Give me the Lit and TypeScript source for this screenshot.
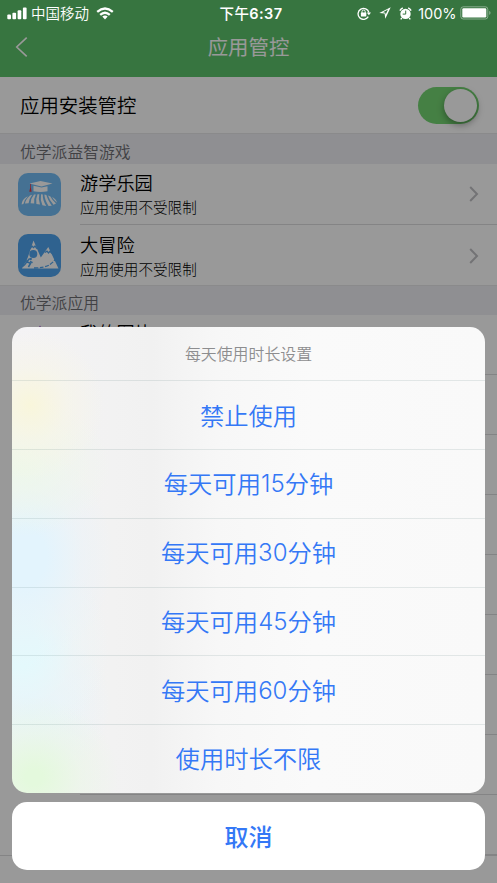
import { LitElement, html, css, svg, nothing } from "lit";
import { customElement } from "lit/decorators.js";

interface AppItem {
  name: string;
  icon: unknown;
}

const farmIcon = svg`
  <rect width="43" height="43" rx="10" fill="#73bdf5"/>
  <g fill="#fff">
    <path d="M11.500 10.600 22.500 8 34.500 10.600 23.500 13.400Z"/>
    <path d="M15.500 12.800 23.500 14.600 29.500 13.200V18.200Q22.500 19.600 15.500 18.200Z"/>
    <path d="M8 24.300Q4 26.800 3.600 31.400L5.400 31Q6.200 26.800 10 23.300Z"/>
    <path d="M12 22.500Q7.600 26.500 7 30.500L10.600 30.200Q11 26 14.200 21.800Z"/>
    <path d="M16 21.600Q12.500 26 12.600 30.200L16.200 30.500Q15.600 25.500 17.800 21.400Z"/>
    <path d="M19.500 21.300Q17.500 26 18.400 30.900L22 31.600Q20 26 21.300 21.200Z"/>
    <path d="M23 21.300Q22 26.500 24.400 32.200L28.200 33Q24.400 26.500 24.800 21.400Z"/>
    <path d="M26.400 21.600Q26.600 27 30.600 33L33.800 32.700Q29.500 26.500 28.400 22Z"/>
    <path d="M30 22.500Q31.500 27.500 35.500 31.700L38 30.400Q34 26.800 32.400 23.400Z"/>
    <path d="M34 24Q36 27.500 39.200 29.800 39 27 35.800 24.900Z"/>
  </g>
  <path d="M12.200 11V14.500L11.300 18.800H13.600L12.900 14.500V11Z" fill="#e8353f"/>`;

const mountainIcon = svg`
  <rect width="43" height="43" rx="10" fill="#4fa4ee"/>
  <path d="M4 34.500 9.600 24 15.500 6.500 22.800 23.500 30.300 13 40.500 34.500Z" fill="#fff"/>
  <g fill="none" stroke="#4fa4ee">
    <path d="M12 14.800 14 12 15.500 13.600 17 12 19.200 14.800" stroke-width="1.300"/>
    <path d="M26.800 18.500 29 17.200 30.500 19 32 17.200 34 19.500" stroke-width="1.300"/>
    <path d="M16 34Q27 34 32 30.500T38.500 22.500" stroke-width="1.300" stroke-dasharray="4 1.500"/>
    <path d="M11.600 24.600 9 27.600 12.500 29.500 10.400 33M9 27.600 6.600 30.800 4.500 32.500M8.500 25.500 6.500 28M12 27.500 14.600 28.600" stroke-width="1.500"/>
  </g>
  <circle cx="15.300" cy="20" r="4" fill="#4fa4ee"/>
  <circle cx="12.700" cy="25" r="1.200" fill="#4fa4ee"/>`;

const pictureIcon = svg`
  <path d="M22 1.500 26 8 18 8Z" fill="#a05bd0"/>`;

const games: AppItem[] = [
  { name: "游学乐园", icon: farmIcon },
  { name: "大冒险", icon: mountainIcon },
];

const apps: AppItem[] = [
  { name: "我的图片", icon: pictureIcon },
  ...Array.from({ length: 8 }, () => ({ name: "", icon: nothing })),
];

const choices = [
  ["禁止使用"],
  ["每天可用", "15", "分钟"],
  ["每天可用", "30", "分钟"],
  ["每天可用", "45", "分钟"],
  ["每天可用", "60", "分钟"],
  ["使用时长不限"],
];

const base = css`
  * {
    box-sizing: border-box;
  }
  svg {
    display: block;
    flex: none;
  }
`;

@customElement("status-bar")
export class StatusBar extends LitElement {
  static styles = [
    base,
    css`
      :host {
        display: grid;
        grid-template-columns: 1fr auto 1fr;
        align-items: center;
        height: 25px;
        padding: 0 5px 0 7px;
        color: #fff;
        font-size: 14.500px;
        line-height: 25px;
      }
      .side {
        display: flex;
        align-items: center;
      }
      .right {
        justify-content: flex-end;
      }
      .carrier {
        margin: 0 7px 0 4px;
      }
      .time {
        font-weight: 500;
        letter-spacing: 0.400px;
        margin-left: 3px;
      }
      .digits {
        font-weight: 600;
      }
      .percent {
        margin: 1px 3.500px 0 6.500px;
        font-weight: 400;
        letter-spacing: -0.050px;
      }
      .arrow {
        margin: 0 8px 0 8px;
      }
    `,
  ];

  render() {
    return html`
      <div class="side">
        <svg width="20" height="13" viewBox="0 0 20 13" fill="#fff">
          <rect x="0.300" y="7.600" width="3.700" height="4.700" rx="1"/>
          <rect x="5.400" y="5.700" width="3.700" height="6.600" rx="1"/>
          <rect x="10.600" y="3.300" width="3.700" height="9" rx="1"/>
          <rect x="15.900" y="0.500" width="3.700" height="11.800" rx="1"/>
        </svg>
        <span class="carrier">中国移动</span>
        <svg width="18" height="13" viewBox="0 0 18 13" fill="none" stroke="#fff" stroke-width="2.300">
          <path d="M1.200 4.900Q9-1.900 16.800 4.900"/>
          <path d="M4.200 7.900Q9 3.500 13.800 7.900"/>
          <path d="M6.300 9.600Q9 7.600 11.700 9.600L9 12.400Z" fill="#fff" stroke="none"/>
        </svg>
      </div>
      <span class="time">下午<span class="digits">6:37</span></span>
      <div class="side right">
        <svg width="14" height="13" viewBox="0 0 14 13">
          <path d="M11.300 9.700A5.500 5.500 0 1 1 11.900 5.500" fill="none" stroke="#fff" stroke-width="1.300"/>
          <path d="M9.700 5.600H14L11.900 8.200Z" fill="#fff"/>
          <rect x="3.900" y="5.600" width="5.400" height="4" rx="0.600" fill="#fff"/>
          <path d="M5 6V4.600a1.600 1.600 0 0 1 3.200 0V6" fill="none" stroke="#fff" stroke-width="1"/>
        </svg>
        <svg class="arrow" width="12" height="12" viewBox="0 0 12 12">
          <path d="M11.700 0.300 0.300 6 5.600 6.500 6.300 11.700ZM9 2.600 6.700 7.500 6.300 5.700 4 5.200Z" fill="#fff" fill-rule="evenodd"/>
        </svg>
        <svg width="13" height="13" viewBox="0 0 13 13">
          <circle cx="6.500" cy="6.900" r="5.200" fill="#fff"/>
          <path d="M0.900 3.600A7 7 0 0 1 3.800 0.900M9.200 0.900A7 7 0 0 1 12.100 3.600" fill="none" stroke="#fff" stroke-width="1.500"/>
          <path d="M2.900 11 1.700 12.400M10.100 11 11.300 12.400" stroke="#fff" stroke-width="1.400"/>
          <path d="M6.700 3.600V7.100H3.700" fill="none" stroke="#387541" stroke-width="1"/>
        </svg>
        <span class="percent">100%</span>
        <svg width="32" height="14" viewBox="0 0 32 14">
          <rect x="0.800" y="0.800" width="27" height="12.200" rx="2.500" fill="none" stroke="#fff" stroke-opacity="0.400"/>
          <rect x="2.300" y="2.300" width="24" height="9.200" rx="1.200" fill="#fff"/>
          <path d="M29.200 4.800Q32 6.900 29.200 9Z" fill="#fff" fill-opacity="0.400"/>
        </svg>
      </div>
    `;
  }
}

@customElement("control-page")
export class ControlPage extends LitElement {
  static styles = [
    base,
    css`
      :host {
        display: flex;
        flex-direction: column;
        height: 100%;
        overflow: hidden;
        background: #fff;
        color: #000;
      }
      .nav {
        display: grid;
        grid-template-columns: 1fr auto 1fr;
        align-items: center;
        flex: none;
        height: 77px;
        padding: 23px 15px 7px;
        background: #5dc36c;
        color: #fff;
        font-size: 20.400px;
        font-weight: 400;
      }
      .nav span {
        margin-top: -1px;
      }
      .install {
        display: flex;
        align-items: center;
        justify-content: space-between;
        flex: none;
        height: 56px;
        padding: 0 18px 0 20px;
        font-size: 19.400px;
      }
      .install span {
        margin-top: -2px;
      }
      .toggle {
        display: flex;
        justify-content: flex-end;
        width: 61px;
        height: 37px;
        padding: 2px;
        border-radius: 19px;
        background: #74d572;
      }
      .knob {
        width: 33px;
        height: 33px;
        border-radius: 50%;
        background: #fff;
        box-shadow: 0 3px 7px rgba(0, 0, 0, 0.350);
      }
      .section {
        flex: none;
        height: 31px;
        padding-left: 20px;
        border-top: 1px solid #e6e6e8;
        background: #efeff4;
        color: #6d6d72;
        font-size: 15.800px;
        line-height: 37px;
      }
      .apps {
        height: 30px;
        line-height: 35px;
      }
      .row {
        display: flex;
        flex: none;
        height: 60px;
        padding-left: 18px;
      }
      .games {
        height: 61px;
      }
      .games.last {
        height: 60px;
      }
      .icon {
        margin: 9px 19px 0 0;
      }
      .body {
        display: flex;
        flex: 1;
        align-items: center;
        justify-content: space-between;
        border-bottom: 1px solid #dcdcde;
        padding-right: 18px;
      }
      .games.last .body {
        border: 0;
        padding-top: 2px;
      }
      .name {
        font-size: 18.200px;
        line-height: 24px;
      }
      .note {
        margin-top: 3px;
        font-size: 14.600px;
        line-height: 20px;
        font-weight: 300;
      }
      .full {
        flex: none;
        height: 1px;
        background: #dcdcde;
      }
    `,
  ];

  private row(item: AppItem, cls = "") {
    return html`
      <div class="row ${cls}">
        <svg class="icon" width="43" height="43" viewBox="0 0 43 43">${item.icon}</svg>
        <div class="body">
          <div>
            <div class="name">${item.name}</div>
            <div class="note">${item.name ? "应用使用不受限制" : nothing}</div>
          </div>
          <svg width="10" height="16" viewBox="0 0 10 16" fill="none" stroke="#c0c0c4" stroke-width="2">
            <path d="M1.200 1 8 8 1.200 15"/>
          </svg>
        </div>
      </div>
    `;
  }

  render() {
    return html`
      <div class="nav">
        <svg width="13" height="20" viewBox="0 0 13 20" fill="none" stroke="#fff" stroke-width="1.600">
          <path d="M11.700 0.600 1.700 10 11.700 19.400"/>
        </svg>
        <span>应用管控</span>
      </div>
      <div class="install">
        <span>应用安装管控</span>
        <div class="toggle"><div class="knob"></div></div>
      </div>
      <div class="section">优学派益智游戏</div>
      ${games.map((g, i) => this.row(g, i === games.length - 1 ? "games last" : "games"))}
      <div class="section apps">优学派应用</div>
      ${apps.map((a) => this.row(a))}
      <div class="full"></div>
    `;
  }
}

@customElement("duration-sheet")
export class DurationSheet extends LitElement {
  static styles = [
    base,
    css`
      :host {
        display: flex;
        flex-direction: column;
        gap: 9.600px;
        text-align: center;
        color: #3478f6;
      }
      .card {
        overflow: hidden;
        border-radius: 15px;
        background:
          radial-gradient(ellipse 75px 75px at 18px 78px, rgba(249, 246, 218, 0.950), rgba(248, 246, 228, 0.500) 50%, rgba(245, 245, 240, 0)),
          radial-gradient(ellipse 85px 80px at 22px 450px, rgba(228, 249, 221, 1) 10%, rgba(233, 247, 229, 0.550) 55%, rgba(242, 245, 241, 0)),
          radial-gradient(ellipse 90px 70px at 10px 140px, rgba(237, 248, 232, 0.850), rgba(240, 246, 239, 0)),
          radial-gradient(ellipse 90px 110px at 12px 230px, rgba(227, 244, 253, 1) 25%, rgba(233, 243, 249, 0.500) 65%, rgba(240, 243, 245, 0)),
          radial-gradient(ellipse 90px 100px at 8px 320px, rgba(228, 249, 252, 1) 20%, rgba(234, 246, 248, 0.500) 60%, rgba(240, 244, 245, 0)),
          radial-gradient(ellipse 85px 80px at 15px 378px, rgba(228, 244, 252, 0.900), rgba(240, 243, 245, 0)),
          linear-gradient(90deg, #f4f3f5 0, #f2f2f2 100px, #f1f1f1 140px, #f7f7f7 205px, #fafafa 300px, #f9f9f9);
      }
      .title {
        height: 53px;
        line-height: 55px;
        font-size: 15.900px;
        color: #8d8d8f;
      }
      .choice {
        display: flex;
        align-items: center;
        justify-content: center;
        height: 68.750px;
        padding-bottom: 2px;
        border-top: 1px solid rgba(60, 100, 100, 0.120);
        font-size: 24.300px;
      }
      .num {
        font-size: 24px;
        padding-top: 2px;
      }
      .cancel {
        height: 68px;
        border-radius: 15px;
        background: #fff;
        font-size: 24px;
        line-height: 71px;
        font-weight: 500;
      }
    `,
  ];

  render() {
    return html`
      <div class="card">
        <div class="title">每天使用时长设置</div>
        ${choices.map(
          ([head, num, tail]) => html`
            <div class="choice">
              <span>${head}</span>${num ? html`<span class="num">${num}</span><span>${tail}</span>` : nothing}
            </div>
          `,
        )}
      </div>
      <div class="cancel">取消</div>
    `;
  }
}

@customElement("app-root")
export class AppRoot extends LitElement {
  static styles = [
    base,
    css`
      :host {
        display: block;
        position: relative;
        width: 497px;
        height: 883px;
        overflow: hidden;
        font-family: Inter, "Noto Sans CJK SC", sans-serif;
        font-weight: 350;
      }
      .overlay {
        position: absolute;
        inset: 0;
        display: flex;
        flex-direction: column;
        justify-content: space-between;
        background: rgba(0, 0, 0, 0.400);
      }
      .sheet {
        margin: 0 12.300px 12.600px;
      }
    `,
  ];

  render() {
    return html`
      <control-page></control-page>
      <div class="overlay">
        <status-bar></status-bar>
        <duration-sheet class="sheet"></duration-sheet>
      </div>
    `;
  }
}
